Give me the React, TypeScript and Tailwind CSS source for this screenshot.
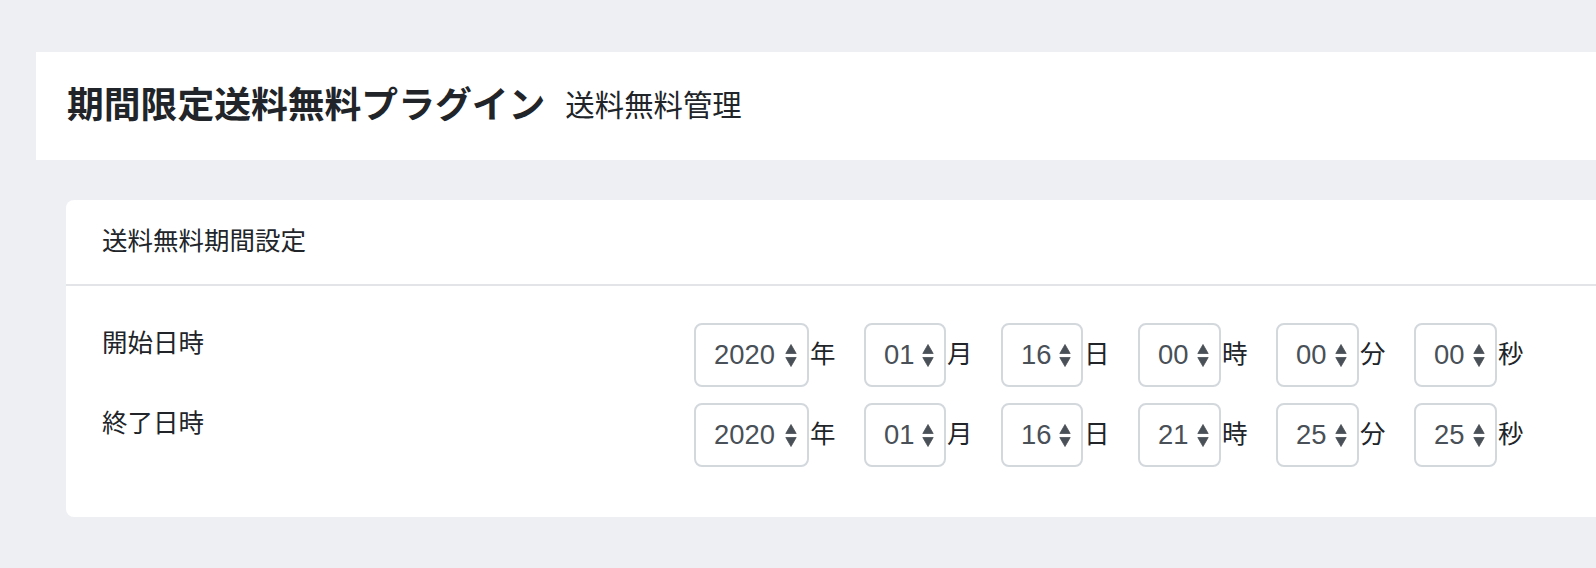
const FONT = "font-['Liberation_Sans','Noto_Sans_CJK_JP',sans-serif]"

type Field = { value: string; unit: string; width: string }

const startFields: Field[] = [
  { value: '2020', unit: '年', width: 'w-[115px]' },
  { value: '01', unit: '月', width: 'w-[82px]' },
  { value: '16', unit: '日', width: 'w-[82px]' },
  { value: '00', unit: '時', width: 'w-[83px]' },
  { value: '00', unit: '分', width: 'w-[83px]' },
  { value: '00', unit: '秒', width: 'w-[83px]' },
]

const endFields: Field[] = [
  { value: '2020', unit: '年', width: 'w-[115px]' },
  { value: '01', unit: '月', width: 'w-[82px]' },
  { value: '16', unit: '日', width: 'w-[82px]' },
  { value: '21', unit: '時', width: 'w-[83px]' },
  { value: '25', unit: '分', width: 'w-[83px]' },
  { value: '25', unit: '秒', width: 'w-[83px]' },
]

function Arrows() {
  return (
    <svg width="12" height="25" viewBox="0 0 12 25" className="shrink-0">
      <path d="M6 1.5 L11.2 10.5 L0.8 10.5 Z" fill="#4a5057" strokeLinejoin="round" stroke="#4a5057" strokeWidth="0.8" />
      <path d="M0.8 14.5 L11.2 14.5 L6 23.5 Z" fill="#4a5057" strokeLinejoin="round" stroke="#4a5057" strokeWidth="0.8" />
    </svg>
  )
}

function SelectBox({ field }: { field: Field }) {
  return (
    <div className="flex items-center">
      <div
        className={`${field.width} h-[64px] flex items-center justify-between pl-[18px] pr-[10px] border-2 border-[#d3d8dd] rounded-lg bg-white`}
      >
        <span className="text-[27.4px] leading-none text-[#495057]">{field.value}</span>
        <Arrows />
      </div>
      <span className="w-[30px] pl-[1px] text-[25.5px] leading-none text-[#212529]">{field.unit}</span>
    </div>
  )
}

function DateRow({ label, fields }: { label: string; fields: Field[] }) {
  return (
    <div className="flex items-start">
      <div className="w-[592px] text-[25.5px] leading-[40px] text-[#212529]">{label}</div>
      <div className="flex gap-[25px]">
        {fields.map((f, i) => (
          <SelectBox key={i} field={f} />
        ))}
      </div>
    </div>
  )
}

export default function App() {
  return (
    <div className={`${FONT} bg-[#edeff2] min-h-[568px] overflow-hidden pt-[52px]`}>
      <div className="ml-[36px] mr-[-20px] h-[108px] bg-white flex items-center pl-[31px]">
        <h1 className="text-[36.8px] font-bold text-[#212529] leading-none">期間限定送料無料プラグイン</h1>
        <span className="ml-[20px] text-[29.4px] text-[#212529] leading-none">送料無料管理</span>
      </div>

      <div className="ml-[66px] mr-[-20px] mt-[40px] bg-white rounded-lg">
        <div className="h-[86px] flex items-center px-[36px] border-b-2 border-[#e2e4e7]">
          <span className="text-[25.5px] text-[#212529] leading-none">送料無料期間設定</span>
        </div>
        <div className="pl-[36px] pt-[37px] pb-[50px] flex flex-col gap-[16px]">
          <DateRow label="開始日時" fields={startFields} />
          <DateRow label="終了日時" fields={endFields} />
        </div>
      </div>
    </div>
  )
}
